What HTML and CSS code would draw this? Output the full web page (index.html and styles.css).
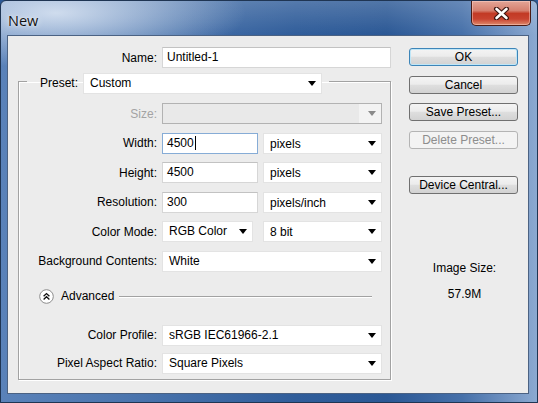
FILE: index.html
```html
<!DOCTYPE html>
<html>
<head>
<meta charset="utf-8">
<title>New</title>
<link rel="stylesheet" href="styles.css">
</head>
<body>
<div class="window">
  <div class="titlebar">
    <span class="title">New</span>
    <div class="close">
      <svg width="17" height="13" viewBox="0 0 17 13">
        <path d="M3.5 2 L13.5 11 M13.5 2 L3.5 11" stroke="#3b1510" stroke-width="5" stroke-linecap="round" fill="none"/>
        <path d="M3.5 2 L13.5 11 M13.5 2 L3.5 11" stroke="#ffffff" stroke-width="2.6" stroke-linecap="round" fill="none"/>
      </svg>
    </div>
  </div>
  <div class="client">
    <div class="main">
      <div class="name-row">
        <span class="label">Name:</span>
        <div class="field">Untitled-1</div>
      </div>
      <fieldset class="group">
        <legend class="legend">
          <span class="legend-label">Preset:</span>
          <div class="select preset">Custom</div>
        </legend>
        <div class="rows">
          <div class="row">
            <span class="label disabled">Size:</span>
            <div class="select dis"></div>
          </div>
          <div class="row">
            <span class="label">Width:</span>
            <div class="pair">
              <div class="field focus num">4500<span class="caret"></span></div>
              <div class="select unit">pixels</div>
            </div>
          </div>
          <div class="row">
            <span class="label">Height:</span>
            <div class="pair">
              <div class="field num">4500</div>
              <div class="select unit">pixels</div>
            </div>
          </div>
          <div class="row">
            <span class="label">Resolution:</span>
            <div class="pair">
              <div class="field num">300</div>
              <div class="select unit">pixels/inch</div>
            </div>
          </div>
          <div class="row">
            <span class="label">Color Mode:</span>
            <div class="pair">
              <div class="select mode">RGB Color</div>
              <div class="select unit">8 bit</div>
            </div>
          </div>
          <div class="row">
            <span class="label">Background Contents:</span>
            <div class="select">White</div>
          </div>
        </div>
        <div class="advanced">
          <span class="adv-icon">
            <svg width="15" height="15" viewBox="0 0 15 15">
              <circle cx="7.5" cy="7.5" r="6.8" fill="#ffffff" stroke="#8c8c8c" stroke-width="1"/>
              <path d="M4.6 7.2 L7.5 4.6 L10.4 7.2 M4.6 10.4 L7.5 7.8 L10.4 10.4" stroke="#111" stroke-width="1.4" fill="none"/>
            </svg>
          </span>
          <span class="adv-text">Advanced</span>
          <span class="adv-line"></span>
        </div>
        <div class="row cp">
          <span class="label">Color Profile:</span>
          <div class="select">sRGB IEC61966-2.1</div>
        </div>
        <div class="row par">
          <span class="label">Pixel Aspect Ratio:</span>
          <div class="select">Square Pixels</div>
        </div>
      </fieldset>
    </div>
    <div class="side">
      <div class="btn default">OK</div>
      <div class="btn">Cancel</div>
      <div class="btn">Save Preset...</div>
      <div class="btn off">Delete Preset...</div>
      <div class="btn device">Device Central...</div>
      <div class="size-info">
        <div>Image Size:</div>
        <div>57.9M</div>
      </div>
    </div>
  </div>
</div>
</body>
</html>
```
FILE: styles.css
```css
* { box-sizing: border-box; }
html, body { margin: 0; padding: 0; }
body {
  width: 538px;
  height: 403px;
  overflow: hidden;
  font-family: "Liberation Sans", Arial, sans-serif;
  font-size: 12px;
  color: #000;
  background: #2b5895;
}
.window {
  width: 538px;
  height: 403px;
  display: flex;
  flex-direction: column;
  border: 1px solid #1f3553;
  border-radius: 6px 6px 0 0;
  background:
    radial-gradient(ellipse 190px 55px at 55px 12px, rgba(225,234,246,0.85), rgba(225,234,246,0)),
    linear-gradient(180deg, rgba(255,255,255,0.18), rgba(255,255,255,0) 34px),
    linear-gradient(90deg, #5a82b9 0%, #4a74ad 25%, #305d9a 55%, #2b5895 72%, #4670a9 86%, #8ba9d1 100%);
}
.titlebar {
  height: 34px;
  display: flex;
  align-items: flex-start;
  padding-left: 7px;
  flex-shrink: 0;
}
.title {
  font-family: "Open Sans", "Noto Sans", sans-serif;
  font-size: 14.5px;
  line-height: 20px;
  margin-top: 10px;
  color: #111;
  text-shadow: 0 0 6px rgba(255,255,255,0.9), 0 0 2px rgba(255,255,255,0.7);
}
.close {
  margin-left: auto;
  margin-right: 6px;
  width: 60px;
  height: 25px;
  border: 1px solid #4a1b14;
  border-top: none;
  border-radius: 0 0 5px 5px;
  background: linear-gradient(180deg, #e3a597 0%, #d5806f 40%, #c23a25 52%, #c84330 75%, #de8a6b 100%);
  box-shadow: inset 0 0 0 1px rgba(255,220,210,0.45);
  display: flex;
  align-items: center;
  justify-content: center;
}
.client {
  margin: 0 8px 8px 6px;
  flex: 1;
  border: 1px solid #4b6283;
  background: #ececec;
  display: flex;
  align-items: flex-start;
}
.main {
  width: 383px;
  padding: 11px 0 0 10px;
}
.label {
  text-align: right;
  white-space: nowrap;
}
.label.disabled { color: #a3a3a3; }
.name-row {
  display: grid;
  grid-template-columns: 139px 229px;
  column-gap: 5px;
  height: 21px;
  align-items: center;
}
.field {
  height: 21px;
  background: #fff;
  border: 1px solid #d6d6d6;
  border-top-color: #c2c2c2;
  padding: 0 4px;
  line-height: 19px;
  white-space: nowrap;
}
.field.focus { border-color: #86acd6; }
.caret {
  display: inline-block;
  width: 1px;
  height: 14px;
  background: #000;
  vertical-align: -3px;
  margin-left: 1px;
}
.group {
  margin: 5px 0 0 0;
  width: 373px;
  padding: 13px 7px 5px 0;
  border: 1px solid #a2a2a2;
  box-shadow: 1px 1px 0 #fff, inset 1px 1px 0 #fff;
  min-width: 0;
}
.legend {
  margin-left: 8px;
  padding: 0 7px 0 13px;
  height: 17px;
  display: flex;
  align-items: flex-start;
  gap: 5px;
}
.legend-label { line-height: 21px; }
.select {
  position: relative;
  height: 21px;
  background: #fff;
  border: 1px solid #e3e3e3;
  padding: 0 6px;
  line-height: 19px;
  white-space: nowrap;
}
.select::after {
  content: "";
  position: absolute;
  right: 5px;
  top: 7px;
  border-left: 4.5px solid transparent;
  border-right: 4.5px solid transparent;
  border-top: 5px solid #000;
}
.select.preset { width: 239px; }
.select.dis {
  border-color: #b2b2b2;
  background: linear-gradient(90deg, #e9e9e9 0, #e9e9e9 calc(100% - 22px), #f3f3f3 calc(100% - 22px));
}
.select.dis::after { border-top-color: #8a8a8a; }
.rows {
  display: flex;
  flex-direction: column;
  gap: 8.6px;
}
.row {
  display: grid;
  grid-template-columns: 138px 220px;
  column-gap: 5px;
  height: 21px;
  align-items: center;
}
.pair {
  display: flex;
  justify-content: space-between;
}
.field.num { width: 96px; }
.select.unit { width: 119px; padding-top: 1px; }
.select.mode { width: 91px; }
.advanced {
  margin-top: 17px;
  height: 15px;
  display: flex;
  align-items: center;
  padding-left: 20px;
}
.adv-icon { width: 15px; height: 15px; display: block; }
.adv-icon svg { display: block; }
.adv-text { margin-left: 7px; }
.adv-line {
  margin-left: 5px;
  width: 253px;
  height: 1px;
  background: #a2a2a2;
  box-shadow: 0 1px 0 #fff;
}
.row.cp { margin-top: 21px; }
.row.par { margin-top: 7px; }
.side {
  margin-left: 18px;
  width: 109px;
  padding-top: 12px;
  display: flex;
  flex-direction: column;
}
.btn {
  height: 18px;
  border: 1px solid #707070;
  border-radius: 3px;
  background: linear-gradient(180deg, #f4f4f4 0%, #ececec 45%, #dedede 52%, #d2d2d2 100%);
  text-align: center;
  line-height: 16px;
  margin-bottom: 9.5px;
}
.btn.default {
  border-color: #3d85b8;
  box-shadow: inset 0 0 0 1px #bfe6f7;
}
.btn.off {
  border-color: #b4b4b4;
  background: #f3f3f3;
  color: #8d8d8d;
}
.btn.device { margin-top: 18px; }
.size-info {
  margin-top: 57px;
  text-align: center;
  padding-left: 2px;
  display: flex;
  flex-direction: column;
  gap: 12px;
  line-height: 14px;
}
```
